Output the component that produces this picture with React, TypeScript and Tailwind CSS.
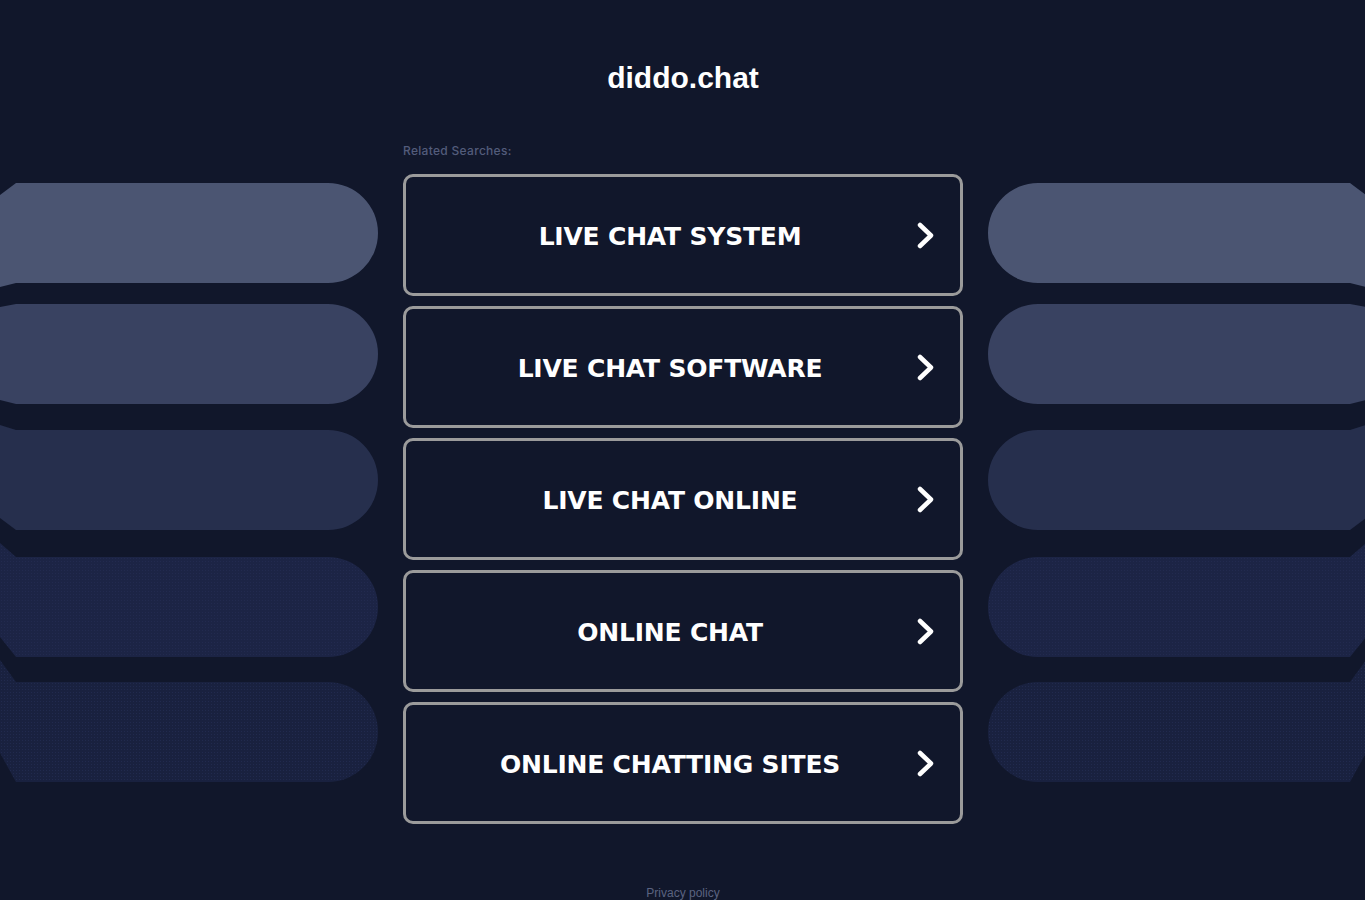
const searches = [
  "LIVE CHAT SYSTEM",
  "LIVE CHAT SOFTWARE",
  "LIVE CHAT ONLINE",
  "ONLINE CHAT",
  "ONLINE CHATTING SITES",
];

// side bands: fill, slanted edge offsets at the outer side, gap above, dotted texture
const bands = [
  { fill: "#4b5572", top: 12, bottom: 104, mt: "mt-0", dots: false },
  { fill: "#394261", top: 3, bottom: 96, mt: "mt-[21px]", dots: false },
  { fill: "#262f4d", top: -5, bottom: 88, mt: "mt-[26px]", dots: false },
  { fill: "#1c2445", top: -14, bottom: 80, mt: "mt-[27px]", dots: true },
  { fill: "#19213f", top: -22, bottom: 71, mt: "mt-[25px]", dots: true },
];

const W = 378;

function Band({
  fill,
  top,
  bottom,
  dots,
  side,
  id,
}: {
  fill: string;
  top: number;
  bottom: number;
  dots: boolean;
  side: "left" | "right";
  id: string;
}) {
  const d =
    side === "left"
      ? `M16 0 H${W - 50} A50 50 0 0 1 ${W - 50} 100 H16 L0 ${bottom} V${top} Z`
      : `M${W - 16} 0 H50 A50 50 0 0 0 50 100 H${W - 16} L${W} ${bottom} V${top} Z`;
  return (
    <svg width={W} height={100} viewBox={`0 0 ${W} 100`} className="block overflow-visible shrink-0">
      {dots && (
        <defs>
          <pattern id={id} width="3" height="3" patternUnits="userSpaceOnUse">
            <rect width="3" height="3" fill={fill} />
            <circle cx="1.5" cy="1.5" r="0.5" fill="#232c52" />
          </pattern>
        </defs>
      )}
      <path d={d} fill={dots ? `url(#${id})` : fill} />
    </svg>
  );
}

function SideColumn({ side }: { side: "left" | "right" }) {
  return (
    <div
      className={`flex flex-col pt-[183px] ${side === "left" ? "items-end" : "items-start"}`}
    >
      {bands.map((b, i) => (
        <div key={i} className={b.mt}>
          <Band {...b} side={side} id={`dots-${side}-${i}`} />
        </div>
      ))}
    </div>
  );
}

function SearchLink({ label }: { label: string }) {
  return (
    <a
      href="#"
      className="flex items-center h-[122px] px-[26px] gap-[9px] border-[3px] border-[#9b9b9b] rounded-[10px] text-white"
    >
      <span
        className="flex-1 pt-[2px] text-center text-[25px] font-bold leading-none tracking-[-0.2px]"
        style={{ fontFamily: '"DejaVu Sans", Verdana, sans-serif' }}
      >
        {label}
      </span>
      <svg width="17" height="27" viewBox="0 0 17 27" className="shrink-0">
        <polyline
          points="3,3 14,13.5 3,24"
          fill="none"
          stroke="#ffffff"
          strokeWidth="4.5"
          strokeLinecap="round"
          strokeLinejoin="round"
        />
      </svg>
    </a>
  );
}

export default function App() {
  return (
    <div className="min-h-screen bg-[#11172b] overflow-hidden">
      <div className="grid grid-cols-[1fr_560px_1fr] gap-x-[25px]">
        <SideColumn side="left" />
        <div className="flex flex-col pt-[60px]">
          <h1
            className="text-center text-white text-[30px] font-bold leading-[36px]"
            style={{ fontFamily: '"Liberation Sans", Arial, sans-serif' }}
          >
            diddo.chat
          </h1>
          <p
            className="mt-[47px] text-[12px] font-medium leading-[16px] tracking-[0.3px] text-[#535c7b]"
            style={{ fontFamily: 'Inter, "Open Sans", sans-serif' }}
          >
            Related Searches:
          </p>
          <div className="mt-[15px] flex flex-col gap-[10px]">
            {searches.map((s) => (
              <SearchLink key={s} label={s} />
            ))}
          </div>
          <div
            className="mt-[61px] text-center text-[12px] leading-[16px] text-[#5b6380] pb-4"
            style={{ fontFamily: '"Liberation Sans", Arial, sans-serif' }}
          >
            Privacy policy
          </div>
        </div>
        <SideColumn side="right" />
      </div>
    </div>
  );
}
